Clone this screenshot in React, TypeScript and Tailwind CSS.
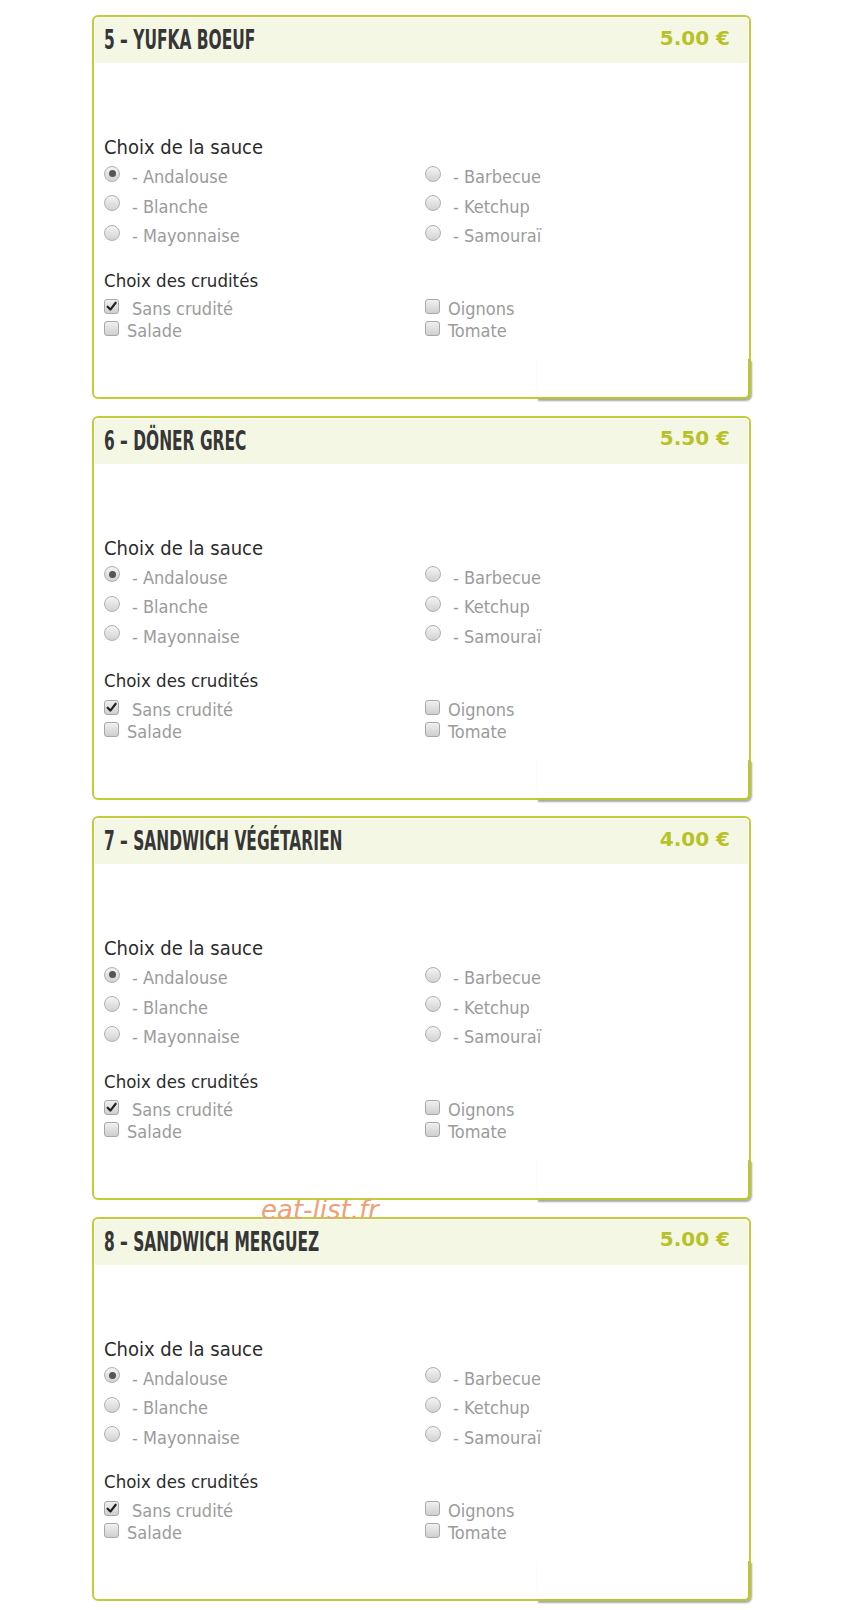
import React from 'react';

type Item = { num: number; name: string; price: string };

const items: Item[] = [
  { num: 5, name: 'YUFKA BOEUF', price: '5.00 €' },
  { num: 6, name: 'DÖNER GREC', price: '5.50 €' },
  { num: 7, name: 'SANDWICH VÉGÉTARIEN', price: '4.00 €' },
  { num: 8, name: 'SANDWICH MERGUEZ', price: '5.00 €' },
];

const sauces = [['Andalouse', 'Barbecue'], ['Blanche', 'Ketchup'], ['Mayonnaise', 'Samouraï']];
const crudites = [['Sans crudité', 'Oignons'], ['Salade', 'Tomate']];

const body = { fontFamily: '"DejaVu Sans Condensed", "DejaVu Sans", Tahoma, sans-serif' };

const Radio = ({ on }: { on?: boolean }) => (
  <span className="relative -top-[3px] flex h-[16px] w-[16px] shrink-0 items-center justify-center rounded-full border border-[#b0b0b0] bg-gradient-to-b from-[#f4f4f4] to-[#d2d2d2]">
    {on && <span className="h-[7px] w-[7px] rounded-full bg-[#555]" />}
  </span>
);

const Check = ({ on }: { on?: boolean }) => (
  <span className="relative -top-[2px] flex h-[15px] w-[15px] shrink-0 items-center justify-center rounded-[3px] border border-[#a8a8a8] bg-gradient-to-b from-[#f0f0f0] to-[#cfcfcf]">
    {on && (
      <svg width="11" height="11" viewBox="0 0 10 10">
        <path d="M1.5 5.2 L4 7.8 L8.8 1.6" fill="none" stroke="#222" strokeWidth="2" strokeLinecap="round" strokeLinejoin="round" />
      </svg>
    )}
  </span>
);

const Card = ({ item }: { item: Item }) => (
  <div className="relative h-[384px] w-[659px] rounded-[6px] border-2 border-[#c3cd38] bg-white p-px">
    <div className="flex h-[45px] items-center justify-between rounded-t-[4px] bg-[#f5f7e5] pl-[9px] pr-[18px]">
      <span className="origin-left scale-x-[0.66] whitespace-nowrap text-[26px] font-bold text-[#363636]" style={{ fontFamily: '"DejaVu Sans Condensed", "DejaVu Sans", sans-serif' }}>
        {item.num} – {item.name}
      </span>
      <span className="relative -top-[3px] text-[20px] font-bold text-[#b6c227]" style={{ fontFamily: '"DejaVu Sans", Verdana, sans-serif' }}>{item.price}</span>
    </div>
    <div className="pl-[9px] pt-[72px]" style={body}>
      <div className="h-[24px] text-[20px] leading-[24px] text-[#2b2b2b]">Choix de la sauce</div>
      <div className="mt-[3px] grid grid-cols-[321px_1fr]">
        {sauces.map(row => row.map(s => (
          <div key={s} className="flex h-[29.5px] items-center">
            <Radio on={s === 'Andalouse'} />
            <span className="ml-[12px] text-[18px] text-[#9b9b9b]">- {s}</span>
          </div>
        )))}
      </div>
      <div className="mt-[19px] h-[22px] text-[18.5px] leading-[22px] text-[#2b2b2b]">Choix des crudités</div>
      <div className="mt-[6px] grid grid-cols-[321px_1fr]">
        {crudites.map(row => row.map(c => (
          <div key={c} className="flex h-[22px] items-center">
            <Check on={c === 'Sans crudité'} />
            <span className={`${c === 'Sans crudité' ? 'ml-[13px]' : 'ml-[8px]'} text-[18px] text-[#9b9b9b]`}>{c}</span>
          </div>
        )))}
      </div>
    </div>
    <div className="absolute -bottom-[2px] -right-[2px] h-[40px] w-[214px] rounded-br-[6px] border-b-2 border-r-[3px] border-[#bcc72e] shadow-[1px_2px_2px_rgba(0,0,0,0.35)]" />
  </div>
);

export default function App() {
  return (
    <div className="relative min-h-[1610px] w-[850px] bg-white pl-[92px] pt-[15px]">
      <div className="flex flex-col gap-[16.5px]">
        {items.map(it => <Card key={it.num} item={it} />)}
      </div>
      <span className="absolute left-[261px] top-[1191px] text-[26px] italic text-[#f0a076]" style={{ fontFamily: '"DejaVu Sans", Verdana, sans-serif' }}>eat-list.fr</span>
    </div>
  );
}
